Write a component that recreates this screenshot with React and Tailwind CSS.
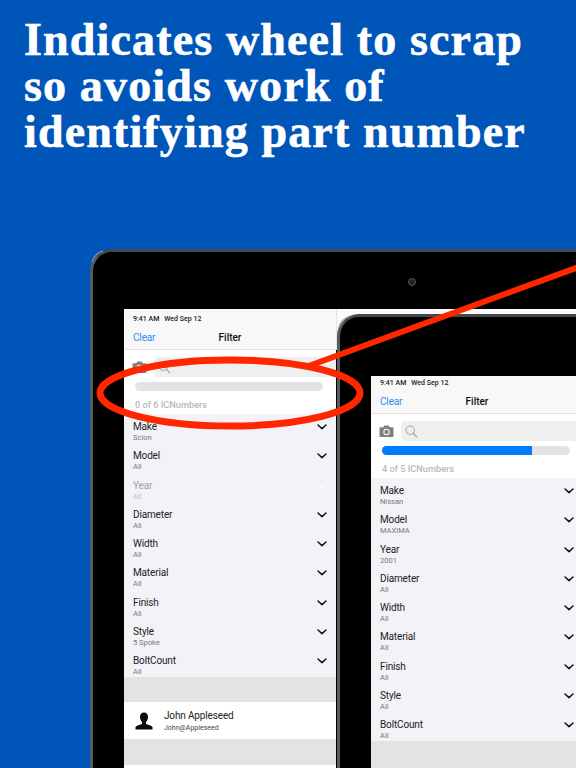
const FONT = { fontFamily: 'Roboto, "Liberation Sans", sans-serif' };

function Chevron({ faded }) {
  return (
    <svg width="10" height="6" viewBox="0 0 10 6">
      <path d="M1 1l4 3.6L9 1" fill="none" stroke={faded ? "#fbfbfd" : "#111"} strokeWidth="1.5" strokeLinecap="round" strokeLinejoin="round" />
    </svg>
  );
}

function Camera() {
  return (
    <svg width="15" height="13" viewBox="0 0 15 13" className="shrink-0">
      <path d="M1.500 2.200h2.800l1-1.700h4.400l1 1.700h2.800q1 0 1 1v7.800q0 1-1 1H1.500q-1 0-1-1V3.200q0-1 1-1z" fill="#7f7f7f" />
      <circle cx="7.500" cy="7" r="3.200" fill="#fff" />
      <circle cx="7.500" cy="7" r="2.200" fill="#7f7f7f" />
    </svg>
  );
}

function Search() {
  return (
    <svg width="13" height="13" viewBox="0 0 13 13" className="shrink-0">
      <circle cx="5.200" cy="5.200" r="4.300" fill="none" stroke="#9a9a9e" strokeWidth="0.9" />
      <path d="M8.400 8.400l3.400 3.400" stroke="#9a9a9e" strokeWidth="1.100" strokeLinecap="round" />
    </svg>
  );
}

function Row({ title, value, faded }) {
  return (
    <div className="h-[29.25px] pl-[9px] pr-[9px] flex justify-between">
      <div className="flex flex-col pt-[7px]">
        <span className={`text-[10px] leading-[12px] tracking-[-0.15px] ${faded ? "text-[#a0a0a0]" : "text-[#222]"}`}>{title}</span>
        <span className={`text-[7.500px] leading-[9px] ${faded ? "text-[#c4c4c4]" : "text-[#77777b]"}`}>{value}</span>
      </div>
      <div className="pt-[10px]"><Chevron faded={faded} /></div>
    </div>
  );
}

function Pane({ rows, progress, count, extras }) {
  return (
    <div className="w-[212px] shrink-0 flex flex-col" style={FONT}>
      <div className="bg-[#f8f8f8] h-[41px] border-b border-[#e4e4e4] flex flex-col">
        <div className="flex gap-[5px] pl-[9px] pt-[6px] text-[7px] leading-[8px] font-medium text-[#222]">
          <span>9:41 AM</span><span>Wed Sep 12</span>
        </div>
        <div className="flex items-center justify-center h-[20px] mt-[4px] relative">
          <span className="absolute left-[9px] text-[10px] tracking-[-0.15px] text-[#2f8cf5]">Clear</span>
          <span className="text-[10px] font-medium text-[#111]">Filter</span>
        </div>
      </div>
      <div className="bg-white h-[64px] flex flex-col pl-[8px]">
        <div className="flex items-center gap-[7px] mt-[7px]">
          <Camera />
          <div className="flex-1 h-[20px] bg-[#efeff0] rounded-l-[5px] flex items-center pl-[4px]"><Search /></div>
        </div>
        <div className="h-[9px] bg-[#e3e3e3] rounded-full ml-[3px] mr-[13px] mt-[5px] overflow-hidden">
          <div className="h-full bg-[#007aff]" style={{ width: progress }} />
        </div>
        <div className="ml-[3px] mt-[9px] text-[9.200px] leading-[10px] font-medium text-[#b9b9b9]">{count}</div>
      </div>
      <div className="bg-[#f2f2f7] flex flex-col">
        {rows.map((r) => <Row key={r[0]} title={r[0]} value={r[1]} faded={r[2]} />)}
      </div>
      {extras ? (
        <div className="flex flex-col">
          <div className="h-[25px] bg-[#e3e3e3]" />
          <div className="h-[37px] bg-white flex items-center pl-[11px]">
            <svg width="18" height="18" viewBox="0 0 18 18" className="shrink-0">
              <path d="M9 0.500c2.700 0 4 2 4 4.500 0 2-1 4-2 5v1.500c0 1 6 2 6.500 3.500v2.500H.5V15c.5-1.500 6.500-2.500 6.500-3.500V10C6 9 5 7 5 5c0-2.500 1.300-4.500 4-4.500z" fill="#0b0b0b" />
            </svg>
            <div className="flex flex-col ml-[11px]">
              <span className="text-[10px] leading-[13px] tracking-[-0.15px] text-[#222]">John Appleseed</span>
              <span className="text-[7px] leading-[10px] mt-[1px] text-[#444]">John@Appleseed</span>
            </div>
          </div>
          <div className="h-[26px] bg-[#e3e3e3]" />
          <div className="h-[40px] bg-white" />
        </div>
      ) : (
        <div className="h-[40px] bg-[#e3e3e3]" />
      )}
    </div>
  );
}

function Device({ className, children }) {
  return (
    <div className={`absolute bg-black rounded-tl-[22px] border-l-[3px] border-t-[3px] border-l-[#565b61] border-t-[#45494d] ${className}`}>
      {children}
    </div>
  );
}

const rows1 = [["Make","Scion"],["Model","All"],["Year","All",true],["Diameter","All"],["Width","All"],["Material","All"],["Finish","All"],["Style","5 Spoke"],["BoltCount","All"]];
const rows2 = [["Make","Nissan"],["Model","MAXIMA"],["Year","2001"],["Diameter","All"],["Width","All"],["Material","All"],["Finish","All"],["Style","All"],["BoltCount","All"]];

export default function App() {
  return (
    <div className="relative w-[576px] h-[768px] overflow-hidden bg-[#0055b8]">
      <h1 className="pl-[24px] pt-[17px] text-white font-bold text-[46px] leading-[46px] tracking-[1.15px] [-webkit-text-stroke:0.6px_white]" style={{ fontFamily: '"Liberation Serif", serif' }}>
        Indicates wheel to scrap<br />so avoids work of<br />identifying part number
      </h1>

      <Device className="left-[90px] top-[249px] w-[520px] h-[560px] pl-[31px] pt-[57px]">
        <div className="flex">
          <Pane rows={rows1} progress="0%" count="0 of 6 ICNumbers" extras />
          <div className="w-[300px] bg-[#fafafa] border-l border-[#e4e4e4] h-[41px] border-b" />
        </div>
      </Device>
      <div className="absolute left-[408px] top-[278px] w-[8px] h-[8px] rounded-full bg-[#222] border border-[#555]" />

      <Device className="left-[337px] top-[314px] w-[300px] h-[500px] pl-[31px] pt-[59px]">
        <div className="overflow-hidden h-[400px]">
          <div className="-mt-[3px]">
            <Pane rows={rows2} progress="80%" count="4 of 5 ICNumbers" />
          </div>
        </div>
      </Device>

      <svg className="absolute left-0 top-0" width="576" height="768" viewBox="0 0 576 768" fill="none">
        <path d="M92 262Q94 254 103 251" stroke="#9aa0a6" strokeWidth="1.500" opacity="0.700" />
        <path d="M339 327Q341 319 350 316" stroke="#9aa0a6" strokeWidth="1.500" opacity="0.700" />
        <ellipse cx="230" cy="393" rx="130" ry="33" stroke="#ff2600" strokeWidth="7" />
        <path d="M306 367L580 266.500" stroke="#ff2600" strokeWidth="6" />
      </svg>
    </div>
  );
}
